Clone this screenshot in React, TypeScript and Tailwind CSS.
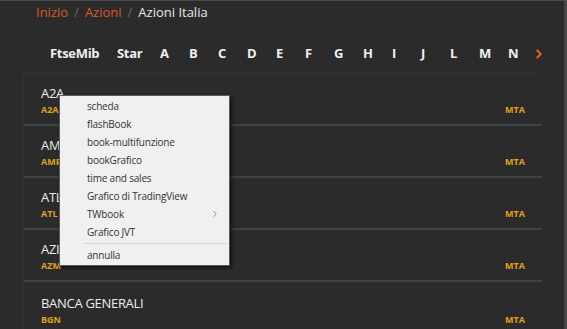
import { ChevronRight } from 'lucide-react'

const rows = [
  { name: 'A2A', code: 'A2A' },
  { name: 'AMPLIFON', code: 'AMP' },
  { name: 'ATLANTIA', code: 'ATL' },
  { name: 'AZIMUT', code: 'AZM' },
  { name: 'BANCA GENERALI', code: 'BGN' },
]

const letters = ['A', 'B', 'C', 'D', 'E', 'F', 'G', 'H', 'I', 'J', 'L', 'M', 'N']

const menuItems = [
  'scheda',
  'flashBook',
  'book-multifunzione',
  'bookGrafico',
  'time and sales',
  'Grafico di TradingView',
  'TWbook',
  'Grafico JVT',
]

function ContextMenu() {
  return (
    <div className="absolute left-[59px] top-[94px] w-[171px] border border-[#5a5a5a] bg-[#f0f0f0] py-[1px] shadow-[2px_2px_3px_rgba(0,0,0,0.6)] font-['Open_Sans',sans-serif] text-[10px] tracking-[-0.2px] text-[#333]">
      {menuItems.map((item) => (
        <div key={item} className="flex h-[18px] items-center justify-between pl-[27px] pr-[9px]">
          <span>{item}</span>
          {item === 'TWbook' && <ChevronRight className="h-[10px] w-[10px] text-[#555]" strokeWidth={1.5} />}
        </div>
      ))}
      <div className="my-[2px] ml-[24px] mr-[2px] h-px bg-[#d5d5d5]" />
      <div className="flex h-[18px] items-center pl-[27px]">annulla</div>
    </div>
  )
}

export default function App() {
  return (
    <div className="relative h-[329px] w-[567px] overflow-hidden border-t border-[#4a4a4a] bg-[#2b2b2b] font-['Open_Sans',sans-serif]">
      <div className="absolute right-0 top-0 h-full w-[3px] bg-[#444]" />

      <div className="flex h-[24px] items-center gap-[6px] pl-[36px] text-[13px]">
        <span className="text-[#d9582b]">Inizio</span>
        <span className="text-[#666]">/</span>
        <span className="text-[#d9582b]">Azioni</span>
        <span className="text-[#666]">/</span>
        <span className="text-[#e8e8e8]">Azioni Italia</span>
      </div>

      <div className="mt-[16px] flex h-[26px] items-center pl-[50px] text-[13px] font-bold tracking-[-0.3px] text-[#f0f0f0]">
        <span className="w-[67px]">FtseMib</span>
        <span className="w-[43px]">Star</span>
        {letters.map((l) => (
          <span key={l} className="w-[29px] text-left">{l}</span>
        ))}
        <ChevronRight className="-ml-[5px] h-[14px] w-[14px] text-[#e0602a]" strokeWidth={3.5} />
      </div>

      <div className="ml-[23px] mt-[6px] w-[519px] border-l border-t border-[#323232]">
        {rows.map((r, i) => (
          <div key={r.code} className={`flex h-[52px] items-end justify-between pb-[7px] pl-[17px] pr-[17px] ${i < rows.length - 1 ? 'border-b-2 border-[#3b424a]' : ''}`}>
            <div className="flex flex-col">
              <span className="text-[13px] leading-[19px] tracking-[-0.3px] text-[#ececec]">{r.name}</span>
              <span className="text-[9px] font-bold leading-[14px] text-[#e0a020]">{r.code}</span>
            </div>
            <span className="text-[9px] font-bold leading-[14px] text-[#e0a020]">MTA</span>
          </div>
        ))}
      </div>

      <ContextMenu />
    </div>
  )
}
